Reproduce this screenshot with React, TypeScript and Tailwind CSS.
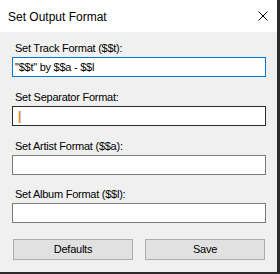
import React from 'react';

const font = { fontFamily: '"Liberation Sans", Arial, sans-serif' };

const Field = ({ label, value, border, className = '' }: { label: string; value?: React.ReactNode; border: string; className?: string }) => (
  <div className={`flex flex-col ${className}`}>
    <label className="pl-[3px] h-[13px] text-[11px] leading-[13px] tracking-[-0.25px] text-black whitespace-nowrap">{label}</label>
    <div className={`mt-[2px] h-[20px] bg-white border flex items-center px-[2px] text-[11px] leading-[13px] tracking-[-0.25px] text-black whitespace-nowrap ${border}`}>
      {value}
    </div>
  </div>
);

const App = () => {
  return (
    <div className="w-[280px] h-[274px] flex flex-col bg-[#f0f0f0] border-r-[3px] border-b-2 border-[#2b2b2b]" style={font}>
      {/* title bar */}
      <div className="h-[32px] shrink-0 bg-white flex items-center justify-between pl-2 pr-[9px]">
        <span className="text-[12px] leading-[14px] pt-[1px] text-black">Set Output Format</span>
        <svg width="10" height="10" viewBox="0 0 10 10" className="block">
          <path d="M0.5 0.5 L9.5 9.5 M9.5 0.5 L0.5 9.5" stroke="#000" strokeWidth="1" />
        </svg>
      </div>

      <div className="flex flex-col pt-[10px] pl-[12px] pr-[11px]">
        <Field label="Set Track Format ($$t):" value={'"$$t" by $$a - $$l'} border="border-[#0078d7]" />
        <Field
          label="Set Separator Format:"
          className="mt-[14px]"
          border="border-[#2b2b2b]"
          value={<span className="pl-[3px] text-[12px] font-bold text-[#d9822b]">|</span>}
        />
        <Field label="Set Artist Format ($$a):" className="mt-[14px]" border="border-[#7a7a7a]" />
        <Field label="Set Album Format ($$l):" className="mt-[13px]" border="border-[#7a7a7a]" />
      </div>

      <div className="flex gap-[12px] pl-[13px] mt-[16px]">
        <button className="w-[120px] h-[21px] bg-[#e1e1e1] border border-[#adadad] text-[11px] leading-[13px] tracking-[-0.25px] text-black">Defaults</button>
        <button className="w-[120px] h-[21px] bg-[#e1e1e1] border border-[#adadad] text-[11px] leading-[13px] tracking-[-0.25px] text-black">Save</button>
      </div>
    </div>
  );
};

export default App;
